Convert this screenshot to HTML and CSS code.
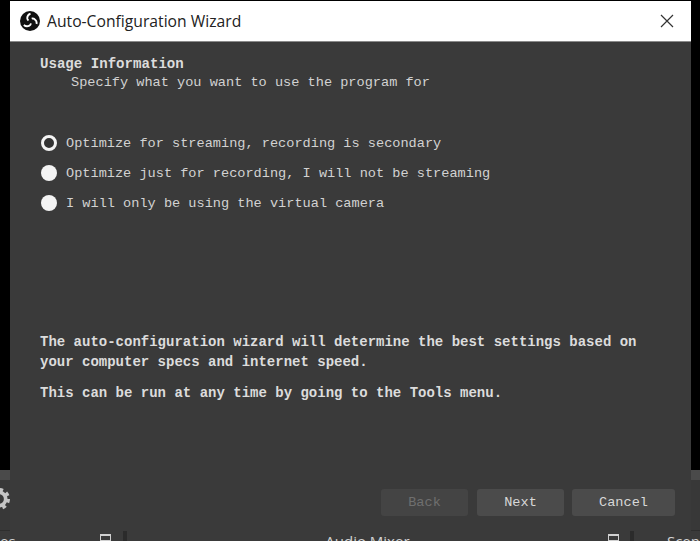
FILE: index.html
```html
<!DOCTYPE html>
<html lang="en">
<head>
  <meta charset="UTF-8" />
  <title>Auto-Configuration Wizard</title>
  <link rel="stylesheet" href="styles.css">
</head>
<body>
  <div class="screen">
    <div class="backdrop"></div>
    <div class="app">
      <div class="toolbar">
        <svg class="gear" width="22" height="22" viewBox="0 0 18 18">
          <circle cx="9" cy="9" r="5.5" fill="none" stroke="#c4c4c4" stroke-width="3" />
          <circle cx="9" cy="9" r="7.5" fill="none" stroke="#c4c4c4" stroke-width="3" stroke-dasharray="3 2.9" />
        </svg>
      </div>
      <div class="docks">
        <div class="dock dock-scenes">
          <span class="dock-title">es</span>
          <span class="dock-icon"></span>
        </div>
        <div class="dock dock-mixer">
          <span class="dock-title">Audio Mixer</span>
          <span class="dock-icon"></span>
        </div>
        <div class="dock dock-last">
          <span class="dock-title">Scen</span>
        </div>
      </div>
    </div>

    <div class="dialog">
      <div class="titlebar">
        <svg class="logo" width="20" height="20" viewBox="0 0 20 20">
          <circle cx="10" cy="10" r="10" fill="#111" />
          <path d="M10.5 2.6a5 5 0 0 0-3.3 4.6c.1 1 .6 1.8 1.3 2.3" fill="none" stroke="#fff" stroke-width="1.8" />
          <path d="M3.8 14a5 5 0 0 0 5.6.6c.9-.5 1.4-1.3 1.5-2.2" fill="none" stroke="#fff" stroke-width="1.8" />
          <path d="M16.6 13a5 5 0 0 0-2.3-5.1c-.9-.5-1.8-.5-2.6-.2" fill="none" stroke="#fff" stroke-width="1.8" />
        </svg>
        <span class="title">Auto-Configuration Wizard</span>
        <svg class="close" width="14" height="14" viewBox="0 0 14 14">
          <path d="M1 1l12 12M13 1L1 13" fill="none" stroke="#333" stroke-width="1.2" />
        </svg>
      </div>

      <div class="content">
        <h1>Usage Information</h1>
        <p class="subtitle">Specify what you want to use the program for</p>

        <div class="options">
          <div class="option"><span class="radio radio-on"></span>Optimize for streaming, recording is secondary</div>
          <div class="option"><span class="radio"></span>Optimize just for recording, I will not be streaming</div>
          <div class="option"><span class="radio"></span>I will only be using the virtual camera</div>
        </div>

        <div class="info">
          <p>The auto-configuration wizard will determine the best settings based on<br>your computer specs and internet speed.</p>
          <p>This can be run at any time by going to the Tools menu.</p>
        </div>

        <div class="buttons">
          <button class="btn btn-disabled" type="button">Back</button>
          <button class="btn" type="button">Next</button>
          <button class="btn btn-wide" type="button">Cancel</button>
        </div>
      </div>
    </div>
  </div>
</body>
</html>
```

FILE: styles.css
```css
* {
  margin: 0;
  padding: 0;
  box-sizing: border-box;
}
body {
  background: #000;
  font-family: "Liberation Mono", monospace;
}
.screen {
  position: relative;
  width: 700px;
  height: 541px;
  overflow: hidden;
  background: #000;
}

/* OBS main window showing behind the dialog */
.backdrop {
  height: 470px;
}
.app {
  height: 71px;
  background: #3a3a3a;
}
.toolbar {
  height: 60px;
  padding-top: 18px;
  background: linear-gradient(#4a4a4a 0, #4a4a4a 10px, #383838 10px);
}
.gear {
  display: block;
  margin-left: -12px;
}
.docks {
  display: flex;
  height: 11px;
  border-top: 1px solid #2e2e2e;
  font-family: "Open Sans", sans-serif;
  font-size: 15px;
  color: #d2d2d2;
}
.dock {
  position: relative;
  height: 30px;
  line-height: 20px;
}
.dock-scenes {
  width: 129px;
  border-right: 4px solid #2b2b2b;
}
.dock-mixer {
  width: 511px;
  border-right: 4px solid #2b2b2b;
  padding-left: 198px;
}
.dock-last {
  flex: 1;
  padding-left: 33px;
}
.dock-icon {
  position: absolute;
  top: 3px;
  right: 12px;
  width: 11px;
  height: 7px;
  border: 1px solid #d0d0d0;
  border-top-width: 2px;
}
.dock-mixer .dock-icon {
  right: 11px;
}

/* dialog */
.dialog {
  position: absolute;
  left: 10px;
  top: 1px;
  width: 681px;
  height: 530px;
  display: flex;
  flex-direction: column;
  background: #3a3a3a;
}
.titlebar {
  display: flex;
  align-items: center;
  height: 41px;
  flex-shrink: 0;
  padding: 0 17px 0 10px;
  background: #fff;
  border-bottom: 1px solid #8a8a8a;
}
.logo {
  margin-right: 7px;
}
.title {
  flex: 1;
  font-family: "Open Sans", sans-serif;
  font-size: 15.7px;
  color: #222;
}
.content {
  flex: 1;
  display: flex;
  flex-direction: column;
  padding: 13px 16px 15px 30px;
  color: #d2d2d2;
}
h1 {
  font-size: 14.1px;
  font-weight: bold;
  line-height: 18px;
  color: #dcdcdc;
}
.subtitle {
  padding-left: 31px;
  font-size: 13.6px;
  line-height: 20px;
}
.options {
  margin-top: 35px;
}
.option {
  display: flex;
  align-items: center;
  height: 30px;
  font-size: 13.6px;
}
.radio {
  width: 16px;
  height: 16px;
  margin: 0 9px 0 1px;
  border-radius: 50%;
  background: #f4f4f4;
  flex-shrink: 0;
}
.radio-on {
  background: #333;
  border: 3px solid #f4f4f4;
}
.info {
  margin-top: 114px;
  font-size: 14px;
  font-weight: bold;
  line-height: 20px;
  color: #dcdcdc;
}
.info p + p {
  margin-top: 11px;
}
.buttons {
  display: flex;
  justify-content: flex-end;
  gap: 8px;
  margin-top: auto;
}
.btn {
  width: 87px;
  height: 27px;
  border: none;
  border-radius: 3px;
  background: #4b4b4b;
  font-family: "Liberation Mono", monospace;
  font-size: 13.6px;
  color: #d8d8d8;
}
.btn-disabled {
  margin-right: 1px;
  background: #444;
  color: #6f6f6f;
}
.btn-wide {
  width: 103px;
}
```
